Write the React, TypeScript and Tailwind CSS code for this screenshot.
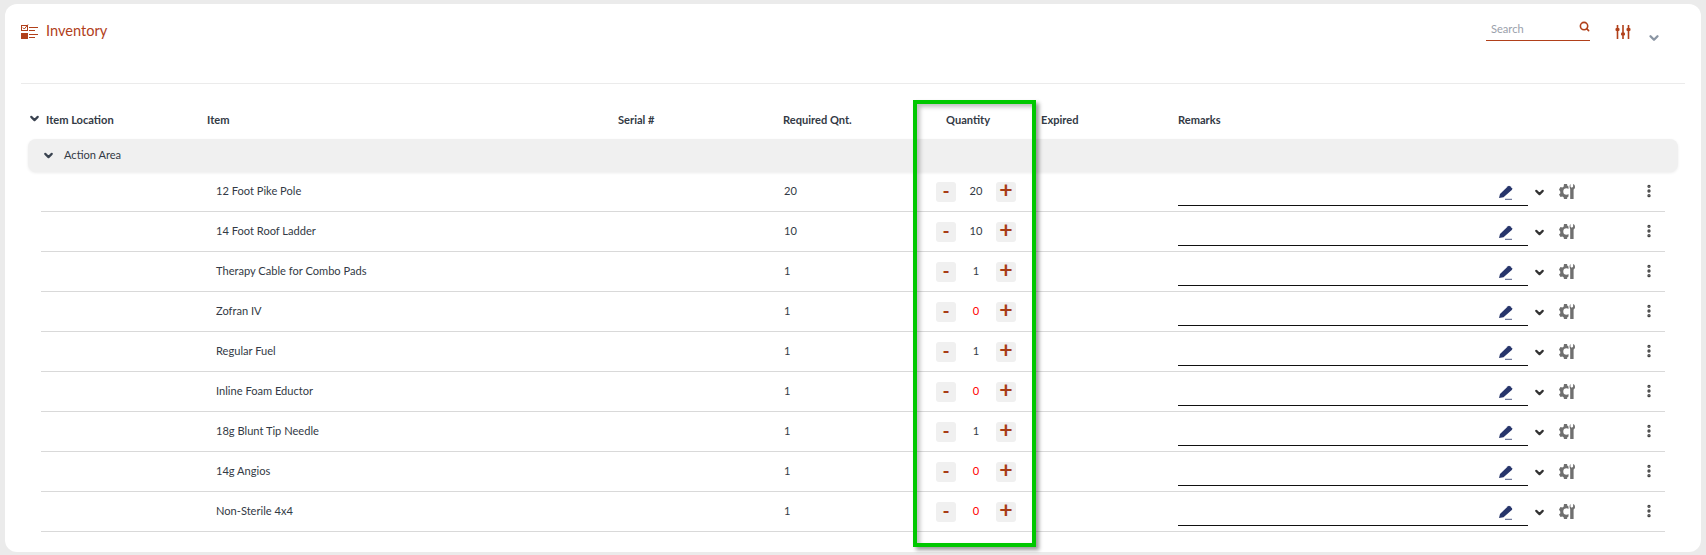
import { ChevronDown, EllipsisVertical, Search } from "lucide-react";

const rows = [
  { name: "12 Foot Pike Pole", required: 20, quantity: 20 },
  { name: "14 Foot Roof Ladder", required: 10, quantity: 10 },
  { name: "Therapy Cable for Combo Pads", required: 1, quantity: 1 },
  { name: "Zofran IV", required: 1, quantity: 0 },
  { name: "Regular Fuel", required: 1, quantity: 1 },
  { name: "Inline Foam Eductor", required: 1, quantity: 0 },
  { name: "18g Blunt Tip Needle", required: 1, quantity: 1 },
  { name: "14g Angios", required: 1, quantity: 0 },
  { name: "Non-Sterile 4x4", required: 1, quantity: 0 },
];

function ChecklistIcon() {
  return (
    <svg width="17" height="15" viewBox="0 0 17 15" className="text-[#b1401a]">
      <rect x="0.5" y="1.5" width="6" height="5" fill="none" stroke="currentColor" />
      <path d="M1.8 3.500 L3.300 5 L7 0.500" fill="none" stroke="currentColor" />
      <rect x="0" y="9" width="7" height="6" fill="currentColor" />
      <path d="M8 3.500h9M8 6.500h6M8 10.500h9M8 13.500h6" stroke="currentColor" strokeWidth="1" />
    </svg>
  );
}

function SlidersIcon() {
  return (
    <svg width="16" height="16" viewBox="0 0 16 16" className="text-[#b1401a]">
      <path d="M2.500 1v14M8 1v14M13.500 1v14" stroke="currentColor" strokeWidth="1.600" />
      <rect x="0.500" y="4" width="4" height="3" rx="1" fill="currentColor" />
      <rect x="6" y="8.500" width="4" height="3" rx="1" fill="currentColor" />
      <rect x="11.500" y="4" width="4" height="3" rx="1" fill="currentColor" />
    </svg>
  );
}

function PencilIcon() {
  return (
    <svg width="16" height="15" viewBox="0 0 15 15" className="text-[#27356b]">
      <path d="M0.500 13 L1.500 9 L9.500 1.200 Q10.500 0.500 11.500 1.200 L13.500 3.200 Q14 4.200 13.300 5 L5 12.300 Z" fill="currentColor" />
      <path d="M6.500 14.300h7" stroke="currentColor" strokeWidth="1" opacity="0.8" />
    </svg>
  );
}

function ToolsIcon() {
  return (
    <svg width="17" height="17" viewBox="0 0 17 17" className="text-[#707070]">
      <path
        d="M5 1h3l.4 1.800 1.100.6V6a3.200 3.200 0 0 0-2-.7 3.200 3.200 0 0 0 0 6.400c.8 0 1.500-.3 2-.7v2.600l-1.100.6L8 16H5l-.4-1.800-1.300-.8-1.800.6L0 11.500l1.300-1.300V8.800L0 6.500 1.500 4l1.800.6 1.300-.8z"
        fill="currentColor"
      />
      <path
        d="M11.500 1v2.800l1.300 1 1.300-1V1c1.300.5 1.900 1.500 1.900 2.900 0 1.100-.5 2-1.400 2.600V16h-3.400V6.500C11.300 5.900 10.600 5 10.600 3.900c0-1.400.3-2.400.9-2.900z"
        fill="currentColor"
      />
    </svg>
  );
}

function QuantityButton({ label }: { label: string }) {
  return (
    <button className="flex h-5 w-5 items-center justify-center rounded-[3px] bg-[#f0f0f0] text-[#a83c17]">
      <span className={label === "+" ? "mt-[-4px] text-[23px] font-bold leading-none" : "mt-[-2px] text-[19px] font-bold leading-none"}>
        {label}
      </span>
    </button>
  );
}

export default function App() {
  return (
    <div className="h-[555px] w-[1706px] overflow-hidden bg-[#ebebeb] px-[5px] pt-[4px] font-['Lato',sans-serif] text-[11.1px] text-[#333a45]">
      <div className="relative h-[548px] rounded-[12px] bg-white px-4">
        <div className="flex h-[80px] items-start border-b border-[#ebebeb]">
          <div className="mt-[17px] flex items-start gap-[8px]">
            <div className="mt-[3px]">
              <ChecklistIcon />
            </div>
            <span className="text-[14.6px] leading-[20px] text-[#b1401a]">Inventory</span>
          </div>
          <div className="ml-auto mr-[24px] mt-[13px] flex items-start">
            <div className="flex h-[24px] w-[104px] items-start justify-between border-b border-[#b1401a] pl-[5px] pt-[5px]">
              <span className="text-[11.1px] leading-[14px] text-[#9aa1ab]">Search</span>
              <Search className="mt-[-1px] h-[11px] w-[11px] text-[#b1401a]" strokeWidth={3.5} />
            </div>
            <div className="ml-[25px] mt-[7px]">
              <SlidersIcon />
            </div>
            <ChevronDown className="ml-[16px] mt-[14px] h-[14px] w-[14px] text-[#8a95a3]" strokeWidth={4} />
          </div>
        </div>

        <div className="mt-[28px] flex h-[16px] items-center font-bold">
          <ChevronDown className="ml-[7px] mt-[-4px] h-[13px] w-[13px] text-[#3a4350]" strokeWidth={4} />
          <span className="ml-[5px] w-[161px]">Item Location</span>
          <span className="w-[411px]">Item</span>
          <span className="w-[165px]">Serial #</span>
          <span className="w-[163px]">Required Qnt.</span>
          <span className="w-[95px]">Quantity</span>
          <span className="w-[137px]">Expired</span>
          <span>Remarks</span>
        </div>

        <div className="mx-[7px] mt-[11px] flex h-[33px] items-center rounded-[8px] bg-[#f0f0f0] shadow-[0_1px_3px_rgba(0,0,0,0.08)]">
          <ChevronDown className="ml-[14px] h-[13px] w-[13px] text-[#3a4350]" strokeWidth={4} />
          <span className="ml-[9px]">Action Area</span>
        </div>

        <div className="mx-[20px]">
          {rows.map((row) => (
            <div key={row.name} className="flex h-[40px] items-center border-b border-[#d9d9d9]">
              <span className="ml-[175px] w-[393px]">{row.name}</span>
              <span className="ml-[175px] w-[152px]">{row.required}</span>
              <div className="flex w-[80px] items-center justify-between">
                <QuantityButton label="-" />
                <span className={row.quantity === 0 ? "text-[#ff0000]" : ""}>{row.quantity}</span>
                <QuantityButton label="+" />
              </div>
              <div className="mb-[5px] ml-[162px] flex h-[26px] w-[350px] items-start justify-end self-end border-b border-[#111111] pr-[14px] pt-[5px]">
                <PencilIcon />
              </div>
              <ChevronDown className="ml-[5px] mt-[2px] h-[13px] w-[13px] text-[#333333]" strokeWidth={4} />
              <div className="ml-[13px]">
                <ToolsIcon />
              </div>
              <EllipsisVertical className="ml-[65px] mt-[-2px] h-[16px] w-[16px] text-[#444444]" strokeWidth={3} />
            </div>
          ))}
        </div>

        <div className="absolute left-[908px] top-[96px] h-[447px] w-[123px] border-[4px] border-[#00c800] shadow-[3px_3px_4px_rgba(0,0,0,0.4),inset_3px_3px_4px_rgba(0,0,0,0.25)]" />
      </div>
    </div>
  );
}
